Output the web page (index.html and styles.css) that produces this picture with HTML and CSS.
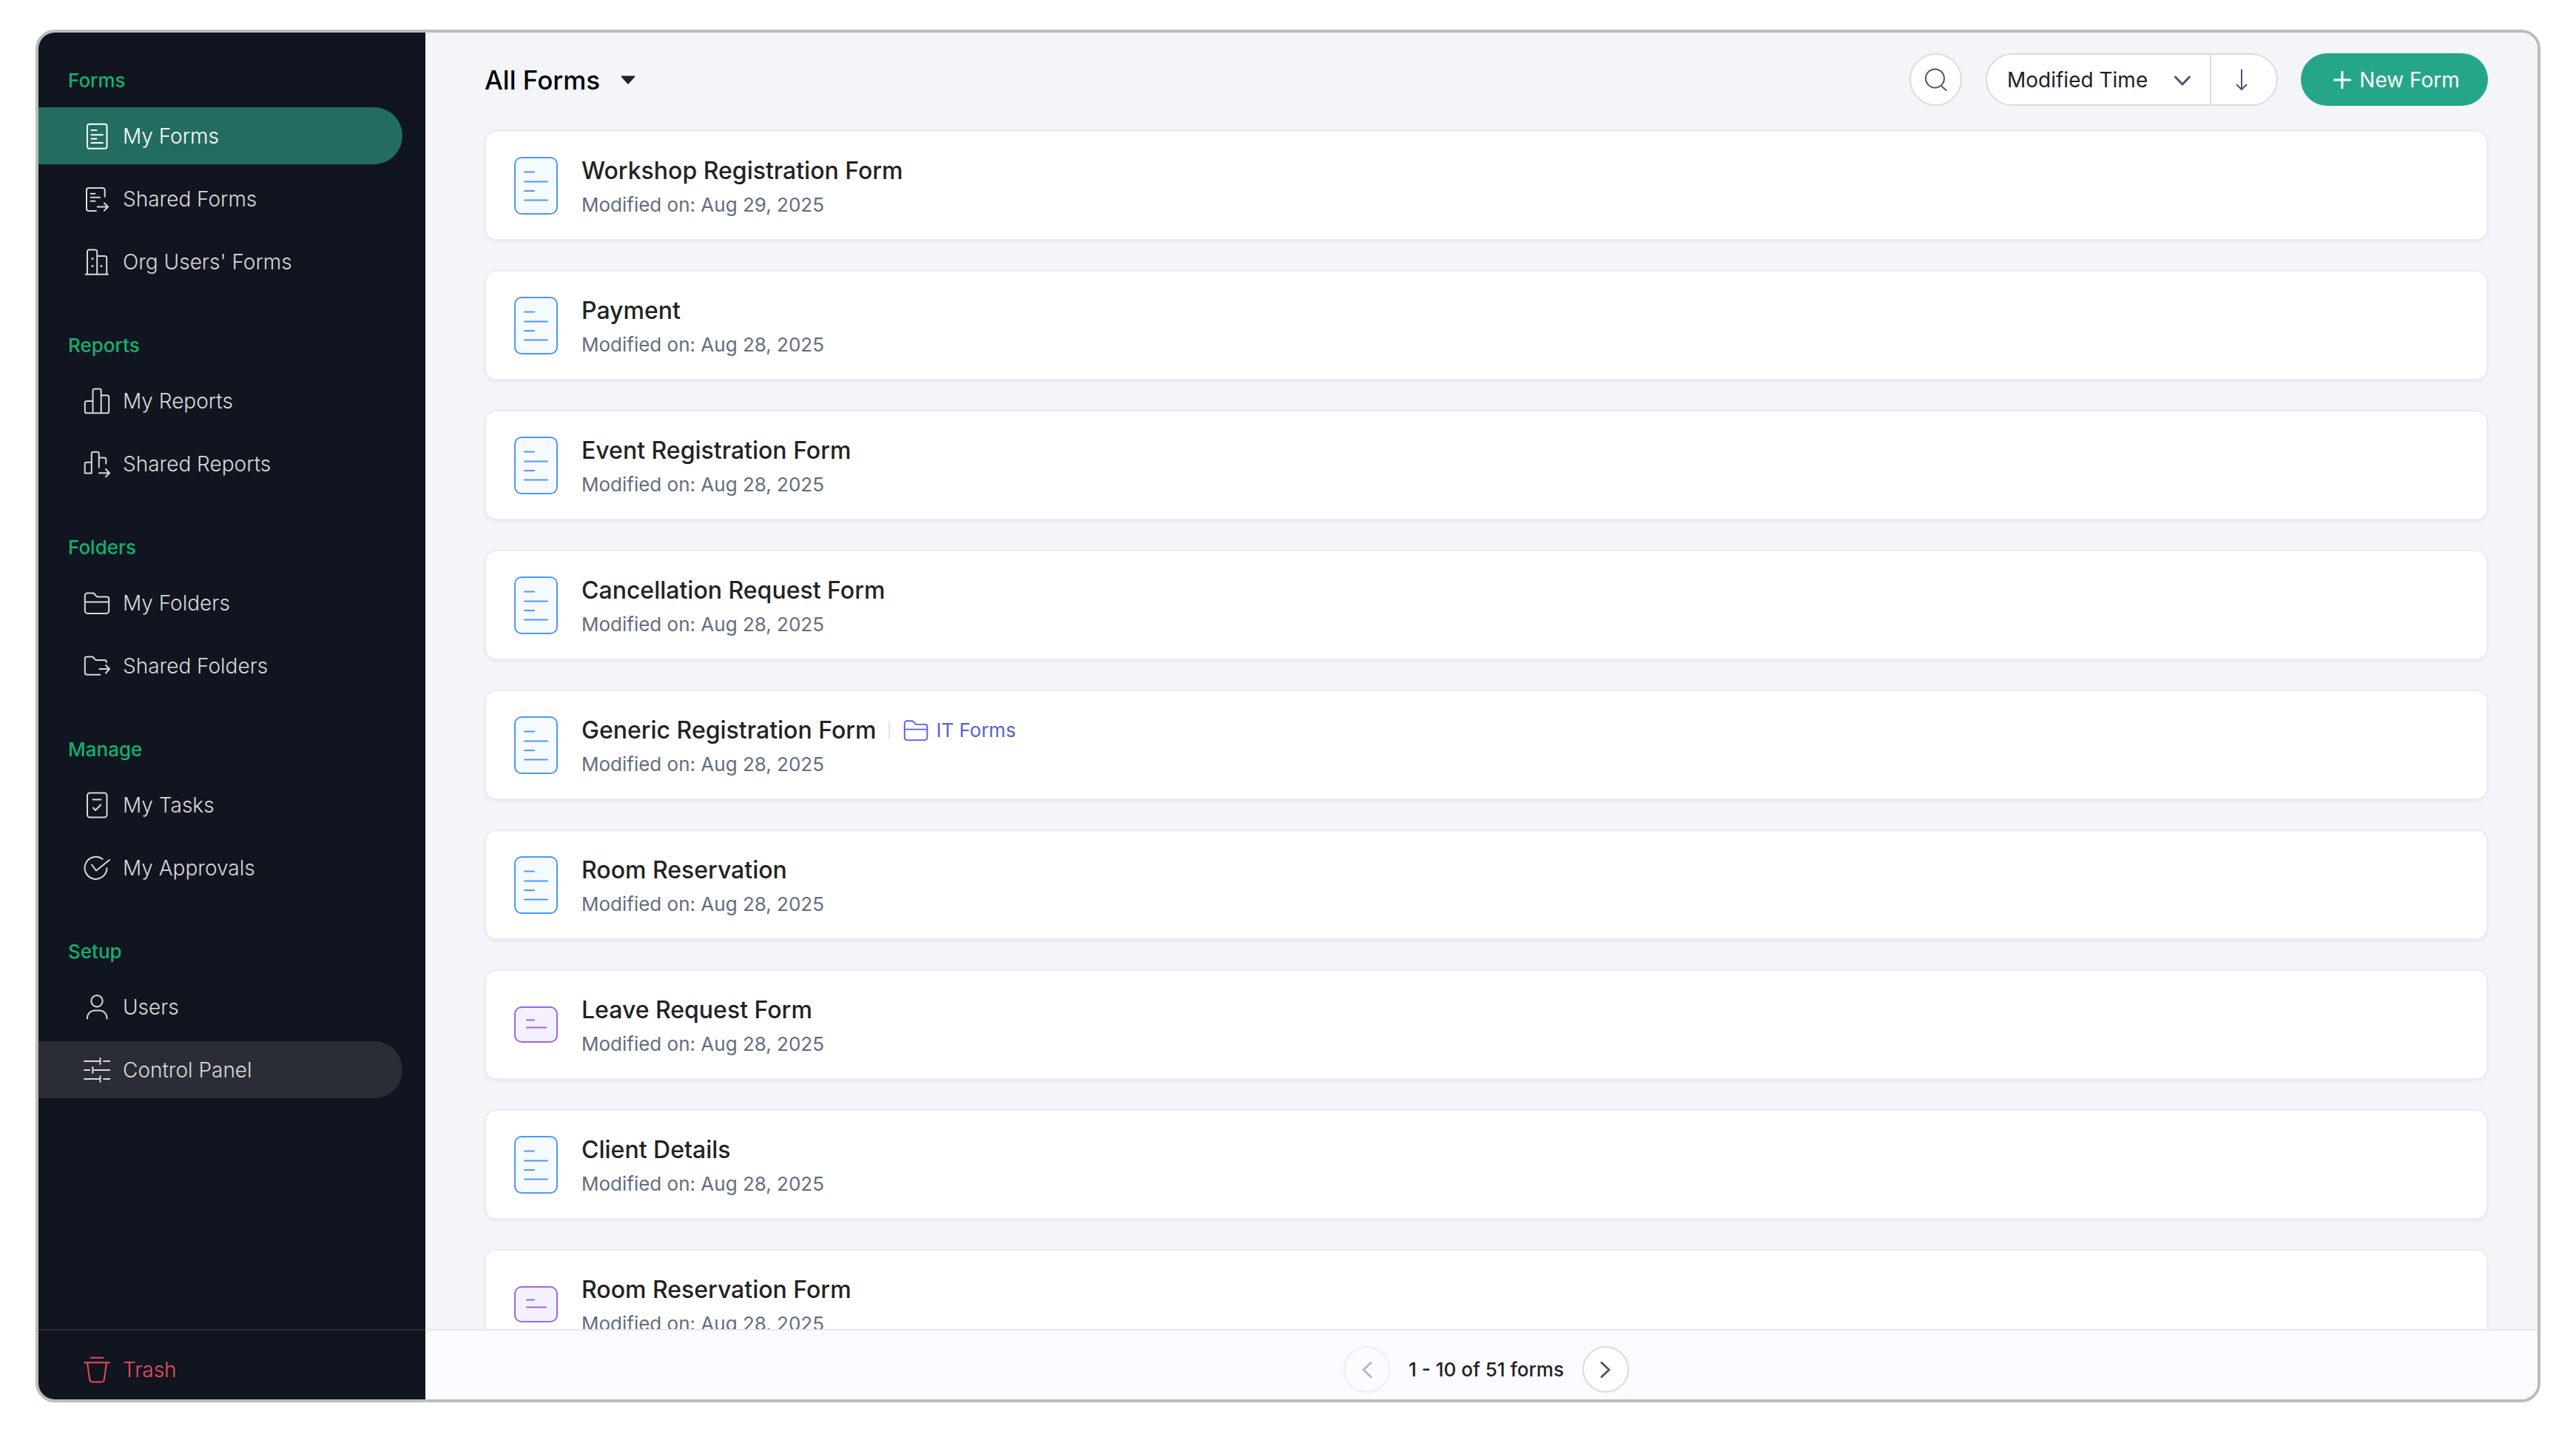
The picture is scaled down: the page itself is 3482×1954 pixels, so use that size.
FILE: index.html
```html
<!DOCTYPE html>
<html lang="en">
<head>
    <meta charset="UTF-8">
    <meta name="viewport" content="width=device-width, initial-scale=1.0">
    <title>All Forms</title>
    <link rel="stylesheet" href="styles.css">
</head>
<body>
    <!-- Shared icons -->
    <svg class="sprite" aria-hidden="true">
        <symbol id="doc" viewBox="0 0 59 78">
            <rect x="1" y="1" width="57" height="76" rx="9" fill="#f5faff"/>
            <path d="M14 20.5h13M14 33.5h31M14 46h13M14 58.5h31"/>
        </symbol>
        <symbol id="card" viewBox="0 0 59 49">
            <rect x="1" y="1" width="57" height="47" rx="9" fill="#f4f1fe"/>
            <path d="M17 18.5h10M17 28.5h26"/>
        </symbol>
        <symbol id="folder" viewBox="0 0 36 36">
            <path d="M1.8 8a3.5 3.5 0 0 1 3.5-3.5h7a3 3 0 0 1 2.2 1l2.8 3.2a2 2 0 0 0 1.6.7h12.3a3 3 0 0 1 3 3v16a3.5 3.5 0 0 1-3.5 3.5H5.3a3.5 3.5 0 0 1-3.5-3.5zM1.8 16.5h32.4"/>
        </symbol>
    </svg>

    <div class="window">
        <!-- Sidebar -->
        <nav class="sidebar">
            <div class="menu">
                <section class="group">
                    <h2>Forms</h2>
                    <a class="item active" href="#">
                        <svg class="icon" viewBox="0 0 36 36"><rect x="5" y="1.8" width="26.5" height="33" rx="3"/><path d="M10.5 10h7M10.5 16.3h15.500M10.5 21.6h7M10.5 27h15.5"/></svg>
                        My Forms
                    </a>
                    <a class="item" href="#">
                        <svg class="icon" viewBox="0 0 36 36"><path d="M28.7 14.7V6a3 3 0 0 0-3-3H7a3 3 0 0 0-3 3v25a3 3 0 0 0 3 3h10M9.5 10.7h6M9.5 15.7h12.5M9.5 20.7h6M18.7 28.5H33M28 23.5l5 5-5 5"/></svg>
                        Shared Forms
                    </a>
                    <a class="item" href="#">
                        <svg class="icon" viewBox="0 0 36 36"><path d="M2.5 34.7h30.5M5 34.5V4a2.5 2.5 0 0 1 2.5-2.5h8A2.5 2.5 0 0 1 18.2 4v30.5M18.2 10h10.5a2.5 2.5 0 0 1 2.5 2.5v22"/><path class="dots" d="M12 13.5h.01M12 23.5h.01M24 23.5h.01"/></svg>
                        Org Users' Forms
                    </a>
                </section>
                <section class="group">
                    <h2>Reports</h2>
                    <a class="item" href="#">
                        <svg class="icon" viewBox="0 0 36 36"><path d="M12.5 34.2V4A2.5 2.5 0 0 1 15 1.5h6.2A2.5 2.5 0 0 1 23.7 4v30.2M12.5 18H4.3a2.5 2.5 0 0 0-2.5 2.5v11.2a2.5 2.5 0 0 0 2.5 2.5h27.4a2.5 2.5 0 0 0 2.5-2.5v-19a2.5 2.5 0 0 0-2.5-2.5h-8"/></svg>
                        My Reports
                    </a>
                    <a class="item" href="#">
                        <svg class="icon" viewBox="0 0 36 36"><path d="M10.8 30.5V4a2.3 2.3 0 0 1 2.3-2.3h5.4A2.3 2.3 0 0 1 20.8 4v18.5M10.8 15.7H4a2.3 2.3 0 0 0-2.3 2.3v12.5h9.1M20.8 9.5h7.2a2.3 2.3 0 0 1 2.3 2.3V17.5M20.8 30.3h14M30 25l5 5.3-5 5"/></svg>
                        Shared Reports
                    </a>
                </section>
                <section class="group">
                    <h2>Folders</h2>
                    <a class="item" href="#">
                        <svg class="icon"><use href="#folder"/></svg>
                        My Folders
                    </a>
                    <a class="item" href="#">
                        <svg class="icon" viewBox="0 0 36 36"><path d="M31 13v-.5a2.5 2.5 0 0 0-2.5-2.5H17.2a2 2 0 0 1-1.5-.6l-2.5-2.9a3 3 0 0 0-2.2-1H4.3a2.5 2.5 0 0 0-2.5 2.5v18.7a3 3 0 0 0 3 3h17.5M21.5 22h13.5M30 17l5 5-5 5.5"/></svg>
                        Shared Folders
                    </a>
                </section>
                <section class="group">
                    <h2>Manage</h2>
                    <a class="item" href="#">
                        <svg class="icon" viewBox="0 0 36 36"><rect x="5" y="1.5" width="26.5" height="33" rx="3.5"/><path d="M12.5 10.5h11M13 21.5l3 3.5 7.2-7.5"/></svg>
                        My Tasks
                    </a>
                    <a class="item" href="#">
                        <svg class="icon" viewBox="0 0 36 36"><path d="M25.7 6A15 15 0 1 0 31.5 18.3M11 13.5l6 8L35 7"/></svg>
                        My Approvals
                    </a>
                </section>
                <section class="group">
                    <h2>Setup</h2>
                    <a class="item" href="#">
                        <svg class="icon" viewBox="0 0 36 36"><circle cx="18" cy="9.7" r="7.7"/><path d="M5 33.5v-1.500a10 10 0 0 1 10-9.5h6.5a10 10 0 0 1 10 9.5v1.5"/></svg>
                        Users
                    </a>
                    <a class="item hover" href="#">
                        <svg class="icon" viewBox="0 0 36 36"><path d="M1 6h21.5M22.5 2v8M27 6h8.5M1 18h7M12.3 14v8M12.3 18h23.2M1 30h21.5M22.5 26v8M27 30h8.5"/></svg>
                        Control Panel
                    </a>
                </section>
            </div>
            <div class="sidebar-footer">
                <a class="item trash" href="#">
                    <svg class="icon" viewBox="0 0 36 36"><path d="M9.5 1.7h17M1 8.3h34M5 8.3l3.2 22.7a4 4 0 0 0 4 3.5h11.6a4 4 0 0 0 4-3.5l3.2-22.7"/></svg>
                    Trash
                </a>
            </div>
        </nav>

        <!-- Main Content -->
        <main class="main-content">
            <header class="toolbar">
                <button class="view-btn" type="button">
                    All Forms
                    <svg class="caret" viewBox="0 0 20 12"><path d="M1.5.5h17a.8.8 0 0 1 .6 1.4l-8.4 9.300a1 1 0 0 1-1.4 0L.9 1.900A.8.8 0 0 1 1.5.5z"/></svg>
                </button>
                <button class="search-btn" type="button" aria-label="Search">
                    <svg class="tool-icon" viewBox="0 0 32 32"><circle cx="14.5" cy="14" r="12.5"/><path d="M22.5 23.5c1.5 2 4.5 3.5 7 6.5"/></svg>
                </button>
                <div class="sort">
                    <select class="sort-select" aria-label="Sort by">
                        <option>Modified Time</option>
                        <option>Created Time</option>
                        <option>Form Name</option>
                    </select>
                    <svg class="chevron" viewBox="0 0 22 14"><path d="M1.5 2l9.5 10 9.5-10"/></svg>
                    <button class="order-btn" type="button" aria-label="Sort order">
                        <svg class="tool-icon" viewBox="0 0 32 32"><path d="M16 2.5v26M9.5 22.5l6.5 6.5 6.5-6.5"/></svg>
                    </button>
                </div>
                <button class="new-btn" type="button">
                    <svg class="plus" viewBox="0 0 24 24"><path d="M12 1v22M1 12h22"/></svg>
                    New Form
                </button>
            </header>

            <ul class="form-list">
                <li class="form-card">
                    <svg class="form-icon doc"><use href="#doc"/></svg>
                    <div class="form-info">
                        <h3>Workshop Registration Form</h3>
                        <p>Modified on: <time>Aug 29, 2025</time></p>
                    </div>
                </li>
                <li class="form-card">
                    <svg class="form-icon doc"><use href="#doc"/></svg>
                    <div class="form-info">
                        <h3>Payment</h3>
                        <p>Modified on: <time>Aug 28, 2025</time></p>
                    </div>
                </li>
                <li class="form-card">
                    <svg class="form-icon doc"><use href="#doc"/></svg>
                    <div class="form-info">
                        <h3>Event Registration Form</h3>
                        <p>Modified on: <time>Aug 28, 2025</time></p>
                    </div>
                </li>
                <li class="form-card">
                    <svg class="form-icon doc"><use href="#doc"/></svg>
                    <div class="form-info">
                        <h3>Cancellation Request Form</h3>
                        <p>Modified on: <time>Aug 28, 2025</time></p>
                    </div>
                </li>
                <li class="form-card">
                    <svg class="form-icon doc"><use href="#doc"/></svg>
                    <div class="form-info">
                        <div class="title-row">
                            <h3>Generic Registration Form</h3>
                            <a class="folder-link" href="#">
                                <svg class="folder-icon"><use href="#folder"/></svg>
                                IT Forms
                            </a>
                        </div>
                        <p>Modified on: <time>Aug 28, 2025</time></p>
                    </div>
                </li>
                <li class="form-card">
                    <svg class="form-icon doc"><use href="#doc"/></svg>
                    <div class="form-info">
                        <h3>Room Reservation</h3>
                        <p>Modified on: <time>Aug 28, 2025</time></p>
                    </div>
                </li>
                <li class="form-card">
                    <svg class="form-icon single"><use href="#card"/></svg>
                    <div class="form-info">
                        <h3>Leave Request Form</h3>
                        <p>Modified on: <time>Aug 28, 2025</time></p>
                    </div>
                </li>
                <li class="form-card">
                    <svg class="form-icon doc"><use href="#doc"/></svg>
                    <div class="form-info">
                        <h3>Client Details</h3>
                        <p>Modified on: <time>Aug 28, 2025</time></p>
                    </div>
                </li>
                <li class="form-card">
                    <svg class="form-icon single"><use href="#card"/></svg>
                    <div class="form-info">
                        <h3>Room Reservation Form</h3>
                        <p>Modified on: <time>Aug 28, 2025</time></p>
                    </div>
                </li>
            </ul>

            <!-- Pagination -->
            <footer class="pager">
                <button class="page-btn" type="button" aria-label="Previous page" disabled>
                    <svg class="page-arrow" viewBox="0 0 14 22"><path d="M12 1.5L2 11l10 9.5"/></svg>
                </button>
                <span>1 - 10 of 51 forms</span>
                <button class="page-btn" type="button" aria-label="Next page">
                    <svg class="page-arrow" viewBox="0 0 14 22"><path d="M2 1.5L12 11 2 20.5"/></svg>
                </button>
            </footer>
        </main>
    </div>
</body>
</html>
```
FILE: styles.css
```css
/* Base Styles */
* {
    margin: 0;
    padding: 0;
    box-sizing: border-box;
}

body {
    height: 100vh;
    padding: 40px 48px 59px;
    background: #fff;
    color: #222;
    font-family: Inter, "Liberation Sans", sans-serif;
    font-size: 28px;
}

button,
select {
    font: inherit;
    color: inherit;
    cursor: pointer;
}

a {
    color: inherit;
    text-decoration: none;
}

svg {
    flex-shrink: 0;
    fill: none;
    stroke: currentColor;
    stroke-width: 2;
    stroke-linecap: round;
    stroke-linejoin: round;
}

.sprite {
    position: absolute;
    width: 0;
    height: 0;
}

.window {
    display: flex;
    height: 100%;
    border: 4px solid #babcbe;
    border-radius: 26px;
    overflow: hidden;
}

/* Sidebar */
.sidebar {
    display: flex;
    flex-direction: column;
    flex-shrink: 0;
    width: 523px;
    background: #11151f;
    color: #d8d9db;
}

.menu {
    display: flex;
    flex: 1;
    flex-direction: column;
    gap: 59px;
    min-height: 0;
    padding: 49px 31px 0 0;
    overflow: hidden;
}

.group {
    display: flex;
    flex-direction: column;
    gap: 8px;
}

.group h2 {
    margin-bottom: 12px;
    padding-left: 40px;
    color: #13b071;
    font-size: 26px;
    font-weight: 500;
    line-height: 32px;
}

.item {
    display: flex;
    align-items: center;
    gap: 17px;
    height: 77px;
    padding-left: 61px;
    border-radius: 0 39px 39px 0;
    font-weight: 300;
}

.item.active {
    background: #236d60;
    color: #fff;
}

.item.hover {
    background: #2a2d36;
}

.icon {
    width: 36px;
    height: 36px;
}

.dots {
    stroke-width: 3;
}

.sidebar-footer {
    height: 95px;
    padding-top: 14px;
    border-top: 2px solid #2a2d36;
}

.item.trash {
    color: #ef4b5f;
}

/* Main Content */
.main-content {
    display: flex;
    flex: 1;
    flex-direction: column;
    min-width: 0;
    background: #f3f5f9;
}

.toolbar {
    display: flex;
    align-items: center;
    padding: 28px 67px 0 80px;
}

.view-btn {
    display: flex;
    align-items: center;
    gap: 28px;
    margin-right: auto;
    border: none;
    background: none;
    color: #000;
    font-size: 35px;
    font-weight: 500;
}

.caret {
    width: 20px;
    height: 12px;
    fill: #222;
    stroke: none;
}

.search-btn {
    display: flex;
    align-items: center;
    justify-content: center;
    width: 71px;
    height: 71px;
    border: 2px solid #d5dde0;
    border-radius: 50%;
    background: #fff;
    color: #4d5470;
}

.tool-icon {
    width: 32px;
    height: 32px;
}

.sort {
    position: relative;
    display: flex;
    height: 71px;
    margin: 0 31px 0 32px;
    border: 2px solid #d5dde0;
    border-radius: 36px;
    background: #fff;
    color: #4d5470;
    overflow: hidden;
}

.sort-select {
    width: 301px;
    padding-left: 27px;
    border: none;
    background: none;
    color: #222;
    appearance: none;
}

/* Lies over the select, which hides its own arrow */
.chevron {
    position: absolute;
    top: 28px;
    left: 253px;
    width: 22px;
    height: 14px;
    stroke-width: 3;
    pointer-events: none;
}

.order-btn {
    display: flex;
    align-items: center;
    justify-content: center;
    width: 90px;
    padding-right: 7px;
    border: none;
    border-left: 2px solid #d5dde0;
    background: none;
}

.new-btn {
    display: flex;
    align-items: center;
    justify-content: center;
    gap: 11px;
    width: 253px;
    height: 71px;
    padding-left: 6px;
    border: none;
    border-radius: 36px;
    background: #26a688;
    color: #fff;
}

.plus {
    width: 24px;
    height: 24px;
    stroke-width: 3;
}

/* Form List */
.form-list {
    display: flex;
    flex: 1;
    flex-direction: column;
    gap: 40px;
    min-height: 0;
    padding: 33px 67px 0 80px;
    list-style: none;
    overflow: hidden;
}

.form-card {
    display: flex;
    flex-shrink: 0;
    align-items: center;
    gap: 32px;
    height: 149px;
    padding: 0 38px;
    border: 2px solid #e7edf5;
    border-radius: 16px;
    background: #fff;
    box-shadow: 0 2px 4px rgba(20, 40, 80, 0.06);
}

.form-icon {
    width: 59px;
}

.form-icon.doc {
    height: 78px;
    color: #5097f8;
}

.form-icon.single {
    height: 49px;
    color: #9966f0;
}

.form-info {
    padding-top: 2px;
}

.form-card h3 {
    font-size: 32px;
    font-weight: 500;
    line-height: 50px;
}

.form-card p {
    color: #626d7e;
    font-size: 26px;
    line-height: 42px;
}

.title-row {
    display: flex;
    align-items: center;
}

.folder-link {
    display: flex;
    align-items: center;
    gap: 10px;
    height: 24px;
    margin-left: 17px;
    padding-left: 18px;
    border-left: 2px solid #e2e4e8;
    color: #5560e5;
    font-size: 26px;
}

.folder-icon {
    width: 34px;
    height: 34px;
}

/* Pagination */
.pager {
    display: flex;
    align-items: center;
    justify-content: center;
    gap: 25px;
    height: 95px;
    padding: 21px 67px 9px 80px;
    border-top: 2px solid #e6e7e8;
    background: #fafbfe;
    font-size: 26px;
    font-weight: 500;
}

.page-btn {
    display: flex;
    align-items: center;
    justify-content: center;
    width: 63px;
    height: 63px;
    border: 2px solid #d5dde0;
    border-radius: 50%;
    background: #fff;
    color: #4d5470;
}

.page-btn:disabled {
    opacity: 0.4;
    cursor: default;
}

.page-arrow {
    width: 14px;
    height: 22px;
    stroke-width: 3;
}
```
